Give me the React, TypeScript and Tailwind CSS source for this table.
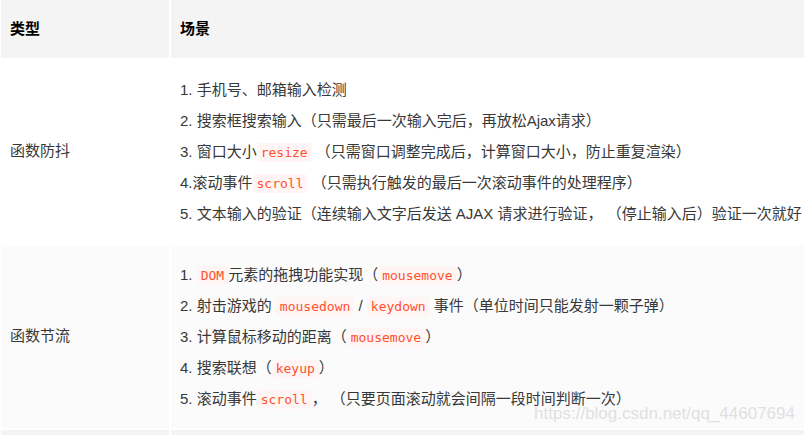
import type { ReactNode } from 'react'

const Code = ({ children }: { children: ReactNode }) => (
  <code className="mx-0 rounded-[4px] bg-[#fff5f5] px-[4px] py-[2px] font-['DejaVu_Sans_Mono',monospace] text-[13px] text-[#ff502c]">
    {children}
  </code>
)

const Line = ({ children }: { children: ReactNode }) => (
  <div className="h-[31px] whitespace-pre leading-[31px]">{children}</div>
)

export default function App() {
  return (
    <div className="relative h-[435px] w-[804px] overflow-hidden bg-white pl-[1px] font-['Liberation_Sans','Noto_Sans_CJK_SC',sans-serif] text-[15px] text-[#383838]">
      <div className="grid grid-cols-[168px_1fr] gap-[2px]">
        {/* header */}
        <div className="flex h-[58px] items-center bg-[#f4f4f4] px-[9px] font-bold text-black">类型</div>
        <div className="flex h-[58px] items-center bg-[#f4f4f4] px-[9px] font-bold text-black">场景</div>

        {/* 函数防抖 */}
        <div className="flex items-center bg-white px-[9px]">函数防抖</div>
        <div className="overflow-hidden bg-white px-[9px] py-[14px]">
          <Line>1. 手机号、邮箱输入检测</Line>
          <Line>2. 搜索框搜索输入（只需最后一次输入完后，再放松Ajax请求）</Line>
          <Line>3. 窗口大小<Code>resize</Code> （只需窗口调整完成后，计算窗口大小，防止重复渲染）</Line>
          <Line>4.滚动事件<Code>scroll</Code> （只需执行触发的最后一次滚动事件的处理程序）</Line>
          <Line>5. 文本输入的验证（连续输入文字后发送 AJAX 请求进行验证， （停止输入后）验证一次就好</Line>
        </div>

        {/* 函数节流 */}
        <div className="flex items-center bg-[#fbfbfb] px-[9px]">函数节流</div>
        <div className="overflow-hidden bg-[#fbfbfb] px-[9px] py-[14px]">
          <Line>1. <Code>DOM</Code>元素的拖拽功能实现（<Code>mousemove</Code>）</Line>
          <Line>2. 射击游戏的 <Code>mousedown</Code> / <Code>keydown</Code> 事件（单位时间只能发射一颗子弹）</Line>
          <Line>3. 计算鼠标移动的距离（<Code>mousemove</Code>）</Line>
          <Line>4. 搜索联想（<Code>keyup</Code>）</Line>
          <Line>5. 滚动事件<Code>scroll</Code>， （只要页面滚动就会间隔一段时间判断一次）</Line>
        </div>

        <div className="h-[6px] bg-[#f4f4f4]" />
        <div className="h-[6px] bg-[#f4f4f4]" />
      </div>

      <div className="absolute bottom-[9px] right-[9px] font-['Liberation_Sans',sans-serif] text-[17px] text-[#e0e0e0] [text-shadow:0_0_1px_#fff]">
        https://blog.csdn.net/qq_44607694
      </div>
    </div>
  )
}
